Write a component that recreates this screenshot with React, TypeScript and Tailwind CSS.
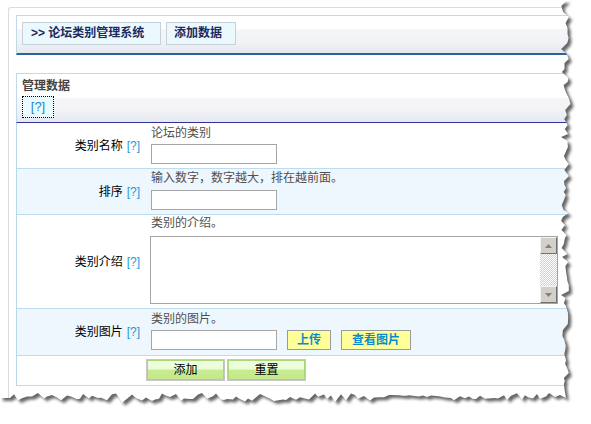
import React from "react";

function makeEdge(): string {
  let seed = 4242;
  const rnd = () => {
    seed = (seed * 16807) % 2147483647;
    return seed / 2147483647;
  };
  const pts: string[] = ["0,0", "567,0"];
  for (let y = 6; y < 394; y += 3 + Math.floor(rnd() * 4)) {
    const x = 561 + rnd() * 8 + (y % 26 < 6 ? 2 : 0);
    pts.push(`${x.toFixed(1)},${y}`);
  }
  pts.push("566,398");
  for (let x = 560; x > 4; x -= 3 + Math.floor(rnd() * 4)) {
    const y = 393 + rnd() * 8 + (x % 30 < 6 ? 2 : 0);
    pts.push(`${x},${y.toFixed(1)}`);
  }
  pts.push("0,398");
  return "M" + pts.join(" L") + " Z";
}

function TornEdge() {
  const paper = makeEdge();
  const outside = "M0 0 H591 V424 H0 Z " + paper;
  return (
    <svg
      className="absolute left-0 top-0 pointer-events-none"
      width="591"
      height="424"
      viewBox="0 0 591 424"
    >
      <defs>
        <clipPath id="outsideClip">
          <path d={outside} clipRule="evenodd" />
        </clipPath>
        <filter id="blurShadow" x="-10%" y="-10%" width="120%" height="120%">
          <feGaussianBlur stdDeviation="1.6" />
        </filter>
      </defs>
      <path d={outside} fill="#ffffff" fillRule="evenodd" />
      <g clipPath="url(#outsideClip)">
        <path
          d={paper}
          transform="translate(3 3)"
          fill="#000000"
          opacity="0.6"
          filter="url(#blurShadow)"
        />
      </g>
    </svg>
  );
}

function Help() {
  return <span className="ml-[4px] text-[#1a9ad6]">[?]</span>;
}

function TextInput() {
  return <div className="w-[126px] h-[20px] border border-[#a5a5a5] bg-white" />;
}

function Arrow({ up }: { up: boolean }) {
  return (
    <svg width="7" height="4" viewBox="0 0 7 4">
      {up ? (
        <polygon points="0,4 7,4 3.5,0" fill="#808080" />
      ) : (
        <polygon points="0,0 7,0 3.5,4" fill="#808080" />
      )}
    </svg>
  );
}

function ScrollBtn({ up }: { up: boolean }) {
  return (
    <div className="w-[17px] h-[17px] shrink-0 flex items-center justify-center bg-[#d4d0c8] border border-t-[#f4f4f4] border-l-[#f4f4f4] border-r-[#707070] border-b-[#707070]">
      <Arrow up={up} />
    </div>
  );
}

function YellowBtn({ children, w }: { children: React.ReactNode; w: string }) {
  return (
    <div
      className={
        w +
        " h-[20px] border border-[#9a9a9a] bg-[#ffff99] flex items-center justify-center font-bold text-[#0a8bcf] text-[12px] leading-[18px]"
      }
    >
      {children}
    </div>
  );
}

function GreenBtn({ children }: { children: React.ReactNode }) {
  return (
    <div className="w-[79px] h-[22px] border border-[#c6c6c6]">
      <div className="h-full border border-[#a9d875] bg-[linear-gradient(#f0ffe2_0,#e8fdd6_45%,#c9ec92_50%,#c3e78a_100%)] flex items-center justify-center text-black text-[12px] leading-[18px]">
        {children}
      </div>
    </div>
  );
}

export default function App() {
  return (
    <div className="relative w-[591px] h-[424px] overflow-hidden bg-white font-['Liberation_Sans','Noto_Sans_CJK_SC',sans-serif] text-[12px] leading-[16px]">
      <div className="ml-[8px] mt-[7px] h-[417px] border-l border-t border-[#dcdcdc] rounded-tl-[3px] pl-[7px] pt-[7px]">
        <div className="w-[570px]">
          {/* Header */}
          <div className="h-[40px] border-t border-l border-[#c2d9e8] border-b-2 border-b-[#2f6299] bg-[linear-gradient(#ffffff_0,#ffffff_13px,#f6f6f8_13px,#f2f3f6_25px,#e5e8ef_37px)] flex gap-[5px] pl-[5px] pt-[6px]">
            <div className="h-[23px] w-[139px] border border-[#c5d1da] bg-[#ebf9fe] font-bold text-[#1b2a5c] leading-[21px] pl-[8px] whitespace-nowrap">
              &gt;&gt; 论坛类别管理系统
            </div>
            <div className="h-[23px] w-[70px] border border-[#c5d1da] bg-[#ebf9fe] font-bold text-[#1b2a5c] leading-[21px] pl-[7px] whitespace-nowrap">
              添加数据
            </div>
          </div>

          {/* Box 2 */}
          <div className="mt-[18px] h-[50px] border-t border-l border-[#c2d9e8] border-b border-b-[#32329a] bg-[linear-gradient(#ffffff_0,#ffffff_24px,#f6f6f8_24px,#f2f3f6_36px,#e5e8ef_48px)] pl-[5px] pt-[4px]">
            <div className="font-bold text-[#444444] leading-[16px]">管理数据</div>
            <div className="mt-[2px] w-[32px] h-[22px] border border-dotted border-black bg-[#eafaff] flex items-center justify-center text-[#1a8ad0] text-[13px]">
              [?]
            </div>
          </div>

          {/* Form table */}
          <div className="border-l border-[#b8d8ea]">
            <div className="flex h-[46px] border-b border-[#bcdcf0] bg-white">
              <div className="w-[131px] shrink-0 flex items-center justify-end pr-[8px] text-black">
                类别名称<Help />
              </div>
              <div className="pl-[3px] pt-[2px]">
                <div className="text-[#505050] leading-[16px]">论坛的类别</div>
                <div className="mt-[3px]">
                  <TextInput />
                </div>
              </div>
            </div>

            <div className="flex h-[46px] border-b border-[#bcdcf0] bg-[#eef6fe]">
              <div className="w-[131px] shrink-0 flex items-center justify-end pr-[8px] text-black">
                排序<Help />
              </div>
              <div className="pl-[3px] pt-[1px]">
                <div className="text-[#505050] leading-[16px] whitespace-nowrap">输入数字，数字越大，排在越前面。</div>
                <div className="mt-[4px]">
                  <TextInput />
                </div>
              </div>
            </div>

            <div className="flex h-[94px] border-b border-[#bcdcf0] bg-white">
              <div className="w-[131px] shrink-0 flex items-center justify-end pr-[8px] text-black">
                类别介绍<Help />
              </div>
              <div className="pl-[2px] pt-[0px]">
                <div className="pl-[1px] text-[#505050] leading-[16px]">类别的介绍。</div>
                <div className="mt-[5px] w-[408px] h-[68px] border border-[#a5a5a5] bg-white flex justify-end">
                  <div className="w-[17px] h-full flex flex-col">
                    <ScrollBtn up={true} />
                    <div className="flex-1 bg-[repeating-conic-gradient(#d4d0c8_0_25%,#ffffff_0_50%)] bg-[length:2px_2px]" />
                    <ScrollBtn up={false} />
                  </div>
                </div>
              </div>
            </div>

            <div className="flex h-[47px] border-b border-[#bcdcf0] bg-[#eef6fe]">
              <div className="w-[131px] shrink-0 flex items-center justify-end pr-[8px] text-black">
                类别图片<Help />
              </div>
              <div className="pl-[3px] pt-[2px]">
                <div className="text-[#505050] leading-[16px]">类别的图片。</div>
                <div className="mt-[3px] flex gap-[10px]">
                  <TextInput />
                  <YellowBtn w="w-[44px]">上传</YellowBtn>
                  <YellowBtn w="w-[70px]">查看图片</YellowBtn>
                </div>
              </div>
            </div>

            <div className="flex h-[30px] border-b border-[#bcdcf0] bg-white">
              <div className="w-[129px] shrink-0" />
              <div className="pt-[3px] flex gap-[2px]">
                <GreenBtn>添加</GreenBtn>
                <GreenBtn>重置</GreenBtn>
              </div>
            </div>
          </div>
        </div>
      </div>
      <TornEdge />
    </div>
  );
}
